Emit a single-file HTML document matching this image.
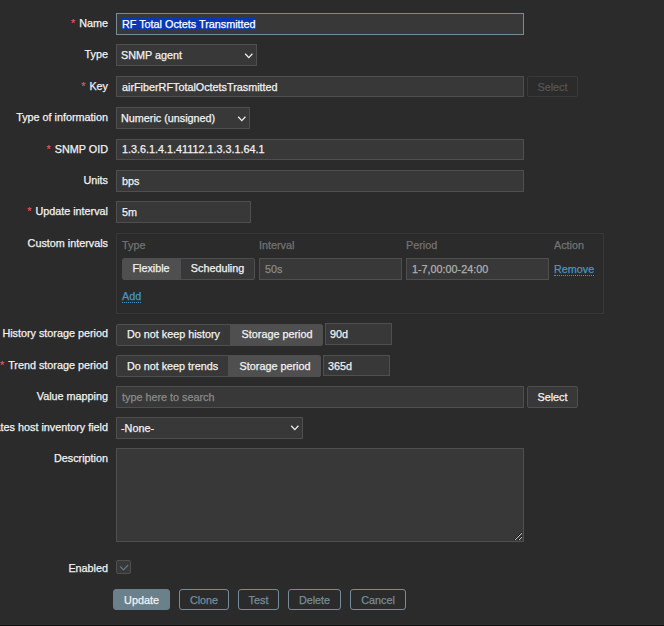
<!DOCTYPE html>
<html><head><meta charset="utf-8">
<style>
html,body{margin:0;padding:0;}
body{-webkit-text-stroke:0.25px;width:664px;height:626px;background:#2b2b2b;position:relative;overflow:hidden;font-family:"Liberation Sans",sans-serif;font-size:10.8px;color:#f2f2f2;}
.l{position:absolute;right:556px;white-space:nowrap;line-height:20px;height:20px;}
.r{color:#e45959;margin-right:4px;-webkit-text-stroke:0.15px;}
.i{position:absolute;box-sizing:border-box;height:22px;background:#383838;border:1px solid #4f4f4f;line-height:20px;padding-left:5px;white-space:nowrap;overflow:hidden;}
.f{border-color:#768d99;}
.sel{padding-left:4px;}
.sel svg{position:absolute;right:0;top:0;}
.btn{position:absolute;box-sizing:border-box;height:21px;border:1px solid #768d99;color:#768d99;text-align:center;line-height:19px;padding-top:1px;border-radius:3px;}
.dis{position:absolute;box-sizing:border-box;height:22px;border:1px solid #3a3a3a;color:#555;text-align:center;line-height:20px;}
.seg{position:absolute;box-sizing:border-box;height:22px;background:#383838;border:1px solid #4f4f4f;border-radius:2px;overflow:hidden;}
.seg span{position:absolute;top:0;height:20px;line-height:20px;text-align:center;}
.seg .on{background:#4f4f4f;}
.h{position:absolute;color:#737373;line-height:14px;}
.a{position:absolute;color:#4796c4;border-bottom:1px dotted #4796c4;line-height:12px;padding-top:1px;}
</style></head><body>

<!-- Name -->
<div class="l" style="top:13px"><span class="r">*</span>Name</div>
<div class="i f" style="left:116px;top:13px;width:408px"><span style="background:#0838ba;color:#fff">RF Total Octets Transmitted</span></div>

<!-- Type -->
<div class="l" style="top:44px">Type</div>
<div class="i sel" style="left:116px;top:44px;width:141px">SNMP agent<svg width="14" height="20"><path d="M3.2 8.8 L6.8 12.6 L10.4 8.8" fill="none" stroke="#f2f2f2" stroke-width="1.25"/></svg></div>

<!-- Key -->
<div class="l" style="top:76px"><span class="r">*</span>Key</div>
<div class="i" style="left:116px;top:76px;width:408px;height:21px">airFiberRFTotalOctetsTrasmitted</div>
<div class="dis" style="left:527px;top:76px;width:51px;height:21px;border-radius:2px">Select</div>

<!-- Type of information -->
<div class="l" style="top:107px">Type of information</div>
<div class="i sel" style="left:116px;top:107px;width:134px">Numeric (unsigned)<svg width="14" height="20"><path d="M3.2 8.8 L6.8 12.6 L10.4 8.8" fill="none" stroke="#f2f2f2" stroke-width="1.25"/></svg></div>

<!-- SNMP OID -->
<div class="l" style="top:139px"><span class="r">*</span>SNMP OID</div>
<div class="i" style="left:116px;top:139px;width:408px;height:21px;line-height:19px">1.3.6.1.4.1.41112.1.3.3.1.64.1</div>

<!-- Units -->
<div class="l" style="top:170px">Units</div>
<div class="i" style="left:116px;top:170px;width:408px">bps</div>

<!-- Update interval -->
<div class="l" style="top:201px"><span class="r">*</span>Update interval</div>
<div class="i" style="left:116px;top:201px;width:135px">5m</div>

<!-- Custom intervals -->
<div class="l" style="top:233px">Custom intervals</div>
<div style="position:absolute;left:116px;top:233px;width:488px;height:81px;box-sizing:border-box;border:1px solid #383838"></div>
<div class="h" style="left:122px;top:238px">Type</div>
<div class="h" style="left:259px;top:238px">Interval</div>
<div class="h" style="left:406px;top:238px">Period</div>
<div class="h" style="left:554px;top:238px">Action</div>
<div class="seg" style="left:122px;top:258px;width:133px"><span class="on" style="left:0;width:58px;line-height:19px;box-sizing:border-box;padding-right:2px">Flexible</span><span style="left:58px;width:75px;line-height:19px;box-sizing:border-box;padding-right:2px">Scheduling</span></div>
<div class="i" style="left:259px;top:258px;width:143px;color:#8a8a8a">50s</div>
<div class="i" style="left:406px;top:258px;width:143px;color:#b0b0b0">1-7,00:00-24:00</div>
<div class="a" style="left:554px;top:262px">Remove</div>
<div class="a" style="left:122px;top:289px">Add</div>

<!-- History -->
<div class="l" style="top:323px">History storage period</div>
<div class="seg" style="left:116px;top:324px;width:207px;line-height:18px"><span style="left:0;width:113px;line-height:18px">Do not keep history</span><span class="on" style="left:113px;width:94px;line-height:18px">Storage period</span></div>
<div class="i" style="left:325px;top:323px;width:67px;padding-left:4px">90d</div>

<!-- Trend -->
<div class="l" style="top:355px"><span class="r">*</span>Trend storage period</div>
<div class="seg" style="left:116px;top:355px;width:205px"><span style="left:0;width:111px">Do not keep trends</span><span class="on" style="left:111px;width:94px">Storage period</span></div>
<div class="i" style="left:323px;top:355px;width:67px;height:21px;padding-left:4px">365d</div>

<!-- Value mapping -->
<div class="l" style="top:386px">Value mapping</div>
<div class="i" style="left:116px;top:386px;width:408px;color:#8a8a8a">type here to search</div>
<div class="btn" style="left:527px;top:386px;width:51px;height:22px;border-color:#4f4f4f;color:#f2f2f2;background:#383838;border-radius:2px">Select</div>

<!-- Inventory -->
<div class="l" style="top:417px">Populates host inventory field</div>
<div class="i sel" style="left:116px;top:417px;width:187px">-None-<svg width="14" height="20" style="top:-1px"><path d="M3.2 8.8 L6.8 12.6 L10.4 8.8" fill="none" stroke="#f2f2f2" stroke-width="1.25"/></svg></div>

<!-- Description -->
<div class="l" style="top:448px">Description</div>
<div class="i" style="left:116px;top:448px;width:408px;height:94px"></div>
<svg style="position:absolute;left:510px;top:528px" width="16" height="16" shape-rendering="crispEdges"><rect x="5" y="11" width="1" height="1" fill="#c9c9c9"/><rect x="6" y="10" width="1" height="1" fill="#c9c9c9"/><rect x="7" y="9" width="1" height="1" fill="#c9c9c9"/><rect x="8" y="8" width="1" height="1" fill="#c9c9c9"/><rect x="9" y="7" width="1" height="1" fill="#c9c9c9"/><rect x="10" y="6" width="1" height="1" fill="#c9c9c9"/><rect x="11" y="5" width="1" height="1" fill="#c9c9c9"/><rect x="4" y="11" width="1" height="1" fill="#161616"/><rect x="5" y="10" width="1" height="1" fill="#161616"/><rect x="6" y="9" width="1" height="1" fill="#161616"/><rect x="7" y="8" width="1" height="1" fill="#161616"/><rect x="8" y="7" width="1" height="1" fill="#161616"/><rect x="9" y="6" width="1" height="1" fill="#161616"/><rect x="10" y="5" width="1" height="1" fill="#161616"/><rect x="11" y="4" width="1" height="1" fill="#161616"/><rect x="9" y="11" width="1" height="1" fill="#c9c9c9"/><rect x="10" y="10" width="1" height="1" fill="#c9c9c9"/><rect x="11" y="9" width="1" height="1" fill="#c9c9c9"/><rect x="8" y="11" width="1" height="1" fill="#161616"/><rect x="9" y="10" width="1" height="1" fill="#161616"/><rect x="10" y="9" width="1" height="1" fill="#161616"/><rect x="11" y="8" width="1" height="1" fill="#161616"/></svg>

<!-- Enabled -->
<div class="l" style="top:558px">Enabled</div>
<div style="position:absolute;left:116px;top:560px;width:15px;height:14px;box-sizing:border-box;border:1px solid #4f4f4f;background:#383838;border-radius:2px"></div>
<svg style="position:absolute;left:116px;top:560px" width="15" height="14"><path d="M4.2 6.4 L7.4 10 L12.2 5" fill="none" stroke="#647b88" stroke-width="1.15"/></svg>

<!-- Buttons -->
<div class="btn" style="left:113px;top:589px;width:57px;background:#6a808b;border-color:#6a808b;color:#f2f2f2">Update</div>
<div class="btn" style="left:179px;top:589px;width:50px">Clone</div>
<div class="btn" style="left:238px;top:589px;width:41px">Test</div>
<div class="btn" style="left:288px;top:589px;width:53px">Delete</div>
<div class="btn" style="left:350px;top:589px;width:56px">Cancel</div>

<div style="position:absolute;left:0;top:624px;width:664px;height:1px;background:#303030"></div>
<div style="position:absolute;left:0;top:625px;width:664px;height:1px;background:#0e0e0e"></div>
</body></html>
